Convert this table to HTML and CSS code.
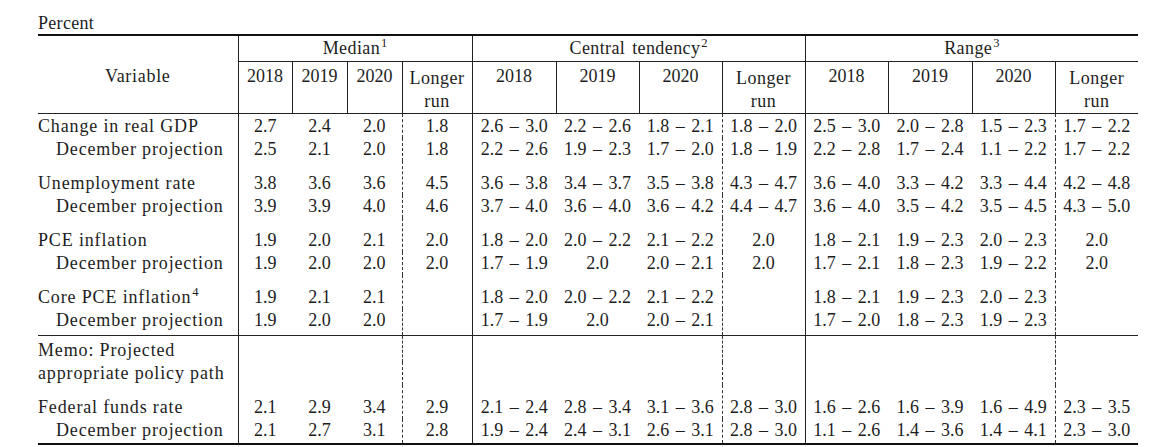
FILE: index.html
```html
<!DOCTYPE html>
<html lang="en">
<head>
<meta charset="utf-8">
<title>Economic projections</title>
<link rel="stylesheet" href="styles.css">
</head>
<body>
<div class="page">
  <div class="unit">Percent</div>
  <table class="proj">
    <colgroup>
      <col class="c-var">
      <col class="c-m"><col class="c-m2"><col class="c-m2"><col class="c-mlr">
      <col class="c-w1"><col class="c-w"><col class="c-w"><col class="c-w">
      <col class="c-w"><col class="c-w1"><col class="c-w"><col class="c-w">
    </colgroup>
    <thead>
      <tr class="hd1">
        <th class="var" rowspan="2">Variable</th>
        <th class="grp" colspan="4">Median<sup>1</sup></th>
        <th class="grp" colspan="4">Central tendency<sup>2</sup></th>
        <th class="grp" colspan="4">Range<sup>3</sup></th>
      </tr>
      <tr class="hd2">
        <th>2018</th><th>2019</th><th>2020</th><th class="lr">Longer<br>run</th>
        <th>2018</th><th>2019</th><th>2020</th><th class="lr">Longer<br>run</th>
        <th>2018</th><th>2019</th><th>2020</th><th class="lr">Longer<br>run</th>
      </tr>
    </thead>
    <tbody>
      <tr class="first">
        <td class="lab">Change in real GDP</td>
        <td>2.7</td><td>2.4</td><td>2.0</td><td>1.8</td>
        <td>2.6 – 3.0</td><td>2.2 – 2.6</td><td>1.8 – 2.1</td><td>1.8 – 2.0</td>
        <td>2.5 – 3.0</td><td>2.0 – 2.8</td><td>1.5 – 2.3</td><td>1.7 – 2.2</td>
      </tr>
      <tr>
        <td class="lab sub">December projection</td>
        <td>2.5</td><td>2.1</td><td>2.0</td><td>1.8</td>
        <td>2.2 – 2.6</td><td>1.9 – 2.3</td><td>1.7 – 2.0</td><td>1.8 – 1.9</td>
        <td>2.2 – 2.8</td><td>1.7 – 2.4</td><td>1.1 – 2.2</td><td>1.7 – 2.2</td>
      </tr>
      <tr class="grpstart">
        <td class="lab">Unemployment rate</td>
        <td>3.8</td><td>3.6</td><td>3.6</td><td>4.5</td>
        <td>3.6 – 3.8</td><td>3.4 – 3.7</td><td>3.5 – 3.8</td><td>4.3 – 4.7</td>
        <td>3.6 – 4.0</td><td>3.3 – 4.2</td><td>3.3 – 4.4</td><td>4.2 – 4.8</td>
      </tr>
      <tr>
        <td class="lab sub">December projection</td>
        <td>3.9</td><td>3.9</td><td>4.0</td><td>4.6</td>
        <td>3.7 – 4.0</td><td>3.6 – 4.0</td><td>3.6 – 4.2</td><td>4.4 – 4.7</td>
        <td>3.6 – 4.0</td><td>3.5 – 4.2</td><td>3.5 – 4.5</td><td>4.3 – 5.0</td>
      </tr>
      <tr class="grpstart">
        <td class="lab">PCE inflation</td>
        <td>1.9</td><td>2.0</td><td>2.1</td><td>2.0</td>
        <td>1.8 – 2.0</td><td>2.0 – 2.2</td><td>2.1 – 2.2</td><td>2.0</td>
        <td>1.8 – 2.1</td><td>1.9 – 2.3</td><td>2.0 – 2.3</td><td>2.0</td>
      </tr>
      <tr>
        <td class="lab sub">December projection</td>
        <td>1.9</td><td>2.0</td><td>2.0</td><td>2.0</td>
        <td>1.7 – 1.9</td><td>2.0</td><td>2.0 – 2.1</td><td>2.0</td>
        <td>1.7 – 2.1</td><td>1.8 – 2.3</td><td>1.9 – 2.2</td><td>2.0</td>
      </tr>
      <tr class="grpstart">
        <td class="lab">Core PCE inflation<sup>4</sup></td>
        <td>1.9</td><td>2.1</td><td>2.1</td><td></td>
        <td>1.8 – 2.0</td><td>2.0 – 2.2</td><td>2.1 – 2.2</td><td></td>
        <td>1.8 – 2.1</td><td>1.9 – 2.3</td><td>2.0 – 2.3</td><td></td>
      </tr>
      <tr class="secend">
        <td class="lab sub">December projection</td>
        <td>1.9</td><td>2.0</td><td>2.0</td><td></td>
        <td>1.7 – 1.9</td><td>2.0</td><td>2.0 – 2.1</td><td></td>
        <td>1.7 – 2.0</td><td>1.8 – 2.3</td><td>1.9 – 2.3</td><td></td>
      </tr>
      <tr class="memo">
        <td class="lab">Memo: Projected</td>
        <td></td><td></td><td></td><td></td>
        <td></td><td></td><td></td><td></td>
        <td></td><td></td><td></td><td></td>
      </tr>
      <tr>
        <td class="lab">appropriate policy path</td>
        <td></td><td></td><td></td><td></td>
        <td></td><td></td><td></td><td></td>
        <td></td><td></td><td></td><td></td>
      </tr>
      <tr class="grpstart">
        <td class="lab">Federal funds rate</td>
        <td>2.1</td><td>2.9</td><td>3.4</td><td>2.9</td>
        <td>2.1 – 2.4</td><td>2.8 – 3.4</td><td>3.1 – 3.6</td><td>2.8 – 3.0</td>
        <td>1.6 – 2.6</td><td>1.6 – 3.9</td><td>1.6 – 4.9</td><td>2.3 – 3.5</td>
      </tr>
      <tr class="last">
        <td class="lab sub">December projection</td>
        <td>2.1</td><td>2.7</td><td>3.1</td><td>2.8</td>
        <td>1.9 – 2.4</td><td>2.4 – 3.1</td><td>2.6 – 3.1</td><td>2.8 – 3.0</td>
        <td>1.1 – 2.6</td><td>1.4 – 3.6</td><td>1.4 – 4.1</td><td>2.3 – 3.0</td>
      </tr>
    </tbody>
  </table>
</div>
</body>
</html>
```

FILE: styles.css
```css
html, body {
  margin: 0;
  background: #ffffff;
}

body {
  color: #1d1d1d;
  font-family: "Liberation Serif", "Times New Roman", serif;
  font-size: 18px;
}

.page {
  padding: 13px 0 0 38px;
}

.unit {
  line-height: 21px;
  letter-spacing: 0.3px;
}

.proj {
  border-collapse: collapse;
  table-layout: fixed;
  width: 1100px;
  border-top: 2px solid #111;
  border-bottom: 2px solid #111;
}

.c-var { width: 200px; }
.c-m { width: 54px; }
.c-m2 { width: 55px; }
.c-mlr { width: 70px; }
.c-w1 { width: 84px; }
.c-w { width: 83px; }

.proj th,
.proj td {
  padding: 0;
  font-weight: normal;
  line-height: 23px;
  text-align: center;
  white-space: nowrap;
  word-spacing: 2px;
}

.proj sup {
  font-size: 12.5px;
  line-height: 0;
  vertical-align: 7px;
  letter-spacing: 0;
  margin-left: 1px;
}

.hd1 {
  height: 26px;
}

.hd1 th {
  vertical-align: middle;
  border-bottom: 1px solid #222;
  letter-spacing: 0.4px;
}

.hd1 .grp {
  border-left: 1px solid #222;
}

.hd1 .var {
  vertical-align: top;
  padding-top: 29px;
  border-right: 1px solid #222;
  border-bottom: 1px solid #222;
  letter-spacing: 0.7px;
}

.hd2 {
  height: 49px;
}

.hd2 th {
  vertical-align: top;
  padding-top: 3px;
  border-left: 1px solid #222;
  border-bottom: 1px solid #222;
}

.hd2 .lr {
  padding-top: 5px;
  letter-spacing: 0.5px;
}

.proj td.lab {
  text-align: left;
  letter-spacing: 0.85px;
  word-spacing: 0;
}

.proj td.sub {
  padding-left: 18px;
}

.proj tbody td:nth-child(1),
.proj tbody td:nth-child(5),
.proj tbody td:nth-child(9) {
  border-right: 1px solid #222;
}

.proj tbody td:nth-child(5),
.proj tbody td:nth-child(9),
.proj tbody td:nth-child(13) {
  border-left: 1px dashed #333;
}

.first td {
  padding-top: 1px;
}

.grpstart td {
  padding-top: 11px;
}

.secend td {
  padding-bottom: 3px;
  border-bottom: 1px solid #222;
}

.memo td {
  padding-top: 3px;
}

.last td {
  padding-bottom: 1px;
}
```
